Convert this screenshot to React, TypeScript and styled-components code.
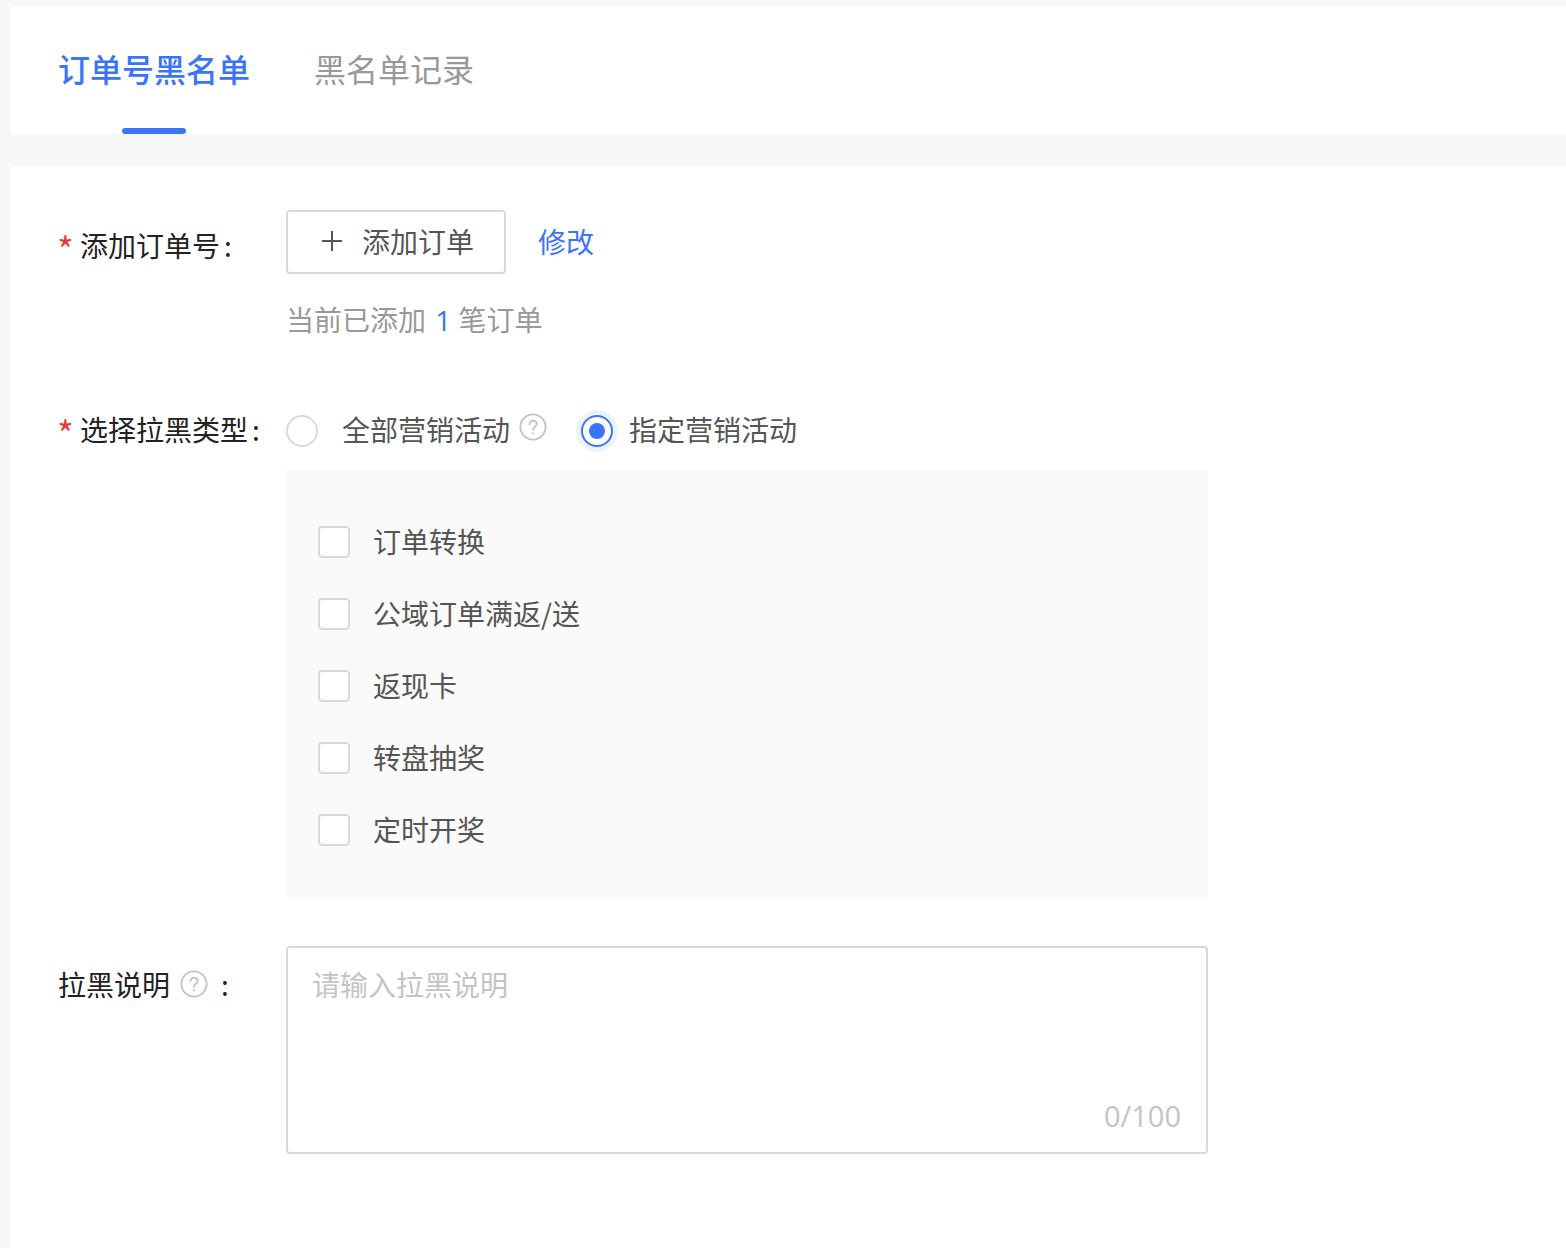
import styled, { createGlobalStyle } from "styled-components";

const campaigns = ['订单转换', '公域订单满返/送', '返现卡', '转盘抽奖', '定时开奖']

const Global = createGlobalStyle`
    * {
        box-sizing: border-box;
    }
    body {
        margin: 0;
        background: #f7f7f7;
        font-family: "Noto Sans CJK SC", "Noto Sans", sans-serif;
    }
`

const HelpIcon = ({size}: {size: number}) => (
    <svg width={size} height={size} viewBox="0 0 28 28" fill="none" stroke="#c4c4c4" strokeWidth="1.9">
        <circle cx="14" cy="14" r="12.6"/>
        <path d="M10.4 11.2c0-2.1 1.6-3.5 3.7-3.5s3.6 1.3 3.6 3.2c0 2.9-3.7 2.9-3.7 6" strokeLinecap="round"/>
        <circle cx="14" cy="20.4" r="1.1" fill="#c4c4c4" stroke="none"/>
    </svg>
)

export default function App() {
    return (
        <Page>
            <Global/>
            <TabBar>
                <Tab $active>订单号黑名单</Tab>
                <Tab>黑名单记录</Tab>
            </TabBar>
            <FormCard>
                <OrderRow>
                    <Label $required $top={14}>添加订单号<Colon>:</Colon></Label>
                    <Field>
                        <ActionLine>
                            <AddButton>
                                <svg width="20" height="20" viewBox="0 0 20 20" stroke="#555" strokeWidth="2">
                                    <path d="M10 0v20M0 10h20"/>
                                </svg>
                                添加订单
                            </AddButton>
                            <EditLink>修改</EditLink>
                        </ActionLine>
                        <Hint>当前已添加 <b>1</b> 笔订单</Hint>
                    </Field>
                </OrderRow>
                <TypeRow>
                    <Label $required $top={-1}>选择拉黑类型<Colon>:</Colon></Label>
                    <Field>
                        <RadioLine>
                            <RadioOption>
                                <Radio/>
                                <OptionText>全部营销活动</OptionText>
                                <HelpSlot><HelpIcon size={28}/></HelpSlot>
                            </RadioOption>
                            <RadioOption $checked>
                                <Radio $checked/>
                                <OptionText>指定营销活动</OptionText>
                            </RadioOption>
                        </RadioLine>
                        <CampaignPanel>
                            {campaigns.map((name) => (
                                <CampaignRow key={name}>
                                    <CheckBox/>
                                    <OptionText>{name}</OptionText>
                                </CampaignRow>
                            ))}
                        </CampaignPanel>
                    </Field>
                </TypeRow>
                <NoteRow>
                    <NoteLabel>
                        拉黑说明
                        <HelpIcon size={28}/>
                        <NoteColon>:</NoteColon>
                    </NoteLabel>
                    <NoteBox>
                        <NoteInput placeholder="请输入拉黑说明"/>
                        <Counter>0/100</Counter>
                    </NoteBox>
                </NoteRow>
            </FormCard>
        </Page>
    );
}

const Page = styled.div`
    height: 1248px;
    overflow: hidden;
    padding: 6px 0 0 10px;
`
const TabBar = styled.div`
    display: flex;
    gap: 64px;
    height: 128px;
    padding-left: 48px;
    background: #fff;
    border-radius: 6px 0 0 6px;
`
const Tab = styled.div<{ $active?: boolean }>`
    position: relative;
    padding-top: 38px;
    font-size: 32px;
    line-height: 48px;
    font-weight: ${p => p.$active ? 500 : 400};
    color: ${p => p.$active ? '#3b74f7' : '#999'};

    &::after {
        content: '';
        display: ${p => p.$active ? 'block' : 'none'};
        position: absolute;
        left: 50%;
        bottom: 0;
        width: 64px;
        height: 6px;
        margin-left: -32px;
        border-radius: 3px;
        background: #3b74f7;
    }
`
const FormCard = styled.div`
    height: 1082px;
    margin-top: 32px;
    padding: 44px 0 0 48px;
    background: #fff;
    border-radius: 6px 0 0 0;
`
const FormRow = styled.div`
    display: flex;
`
const OrderRow = styled(FormRow)``
const TypeRow = styled(FormRow)`
    margin-top: 68px;
`
const NoteRow = styled(FormRow)`
    margin-top: 49px;
`
const Label = styled.div<{ $required?: boolean; $top: number }>`
    flex: 0 0 228px;
    height: 42px;
    margin-top: ${p => p.$top}px;
    font-size: 28px;
    line-height: 42px;
    color: #222;
    white-space: nowrap;

    ${p => p.$required && `
        &::before {
            content: '*';
            display: inline-block;
            width: 22px;
            margin-left: -1px;
            margin-right: 1px;
            font-size: 36px;
            line-height: 30px;
            vertical-align: -7px;
            color: #e83a3a;
        }
    `}
`
const Colon = styled.span`
    margin-left: 4px;
`
const Field = styled.div`
    width: 922px;
`
const ActionLine = styled.div`
    display: flex;
    align-items: center;
    gap: 32px;
`
const AddButton = styled.div`
    display: flex;
    align-items: center;
    justify-content: center;
    gap: 20px;
    width: 220px;
    height: 64px;
    padding: 0 0 2px 4px;
    border: 2px solid #d9d9d9;
    border-radius: 4px;
    font-size: 28px;
    color: #555;
    background: #fff;
`
const EditLink = styled.span`
    margin-top: -2px;
    font-size: 28px;
    line-height: 64px;
    color: #3b74f7;
`
const Hint = styled.div`
    margin-top: 24px;
    font-size: 28px;
    line-height: 42px;
    color: #999;

    b {
        margin: 0 1px 0 3px;
        font-family: "Open Sans", sans-serif;
        font-weight: 400;
        color: #3b74f7;
    }
`
const RadioLine = styled.div`
    display: flex;
    align-items: center;
    height: 42px;
    gap: 34px;
`
const RadioOption = styled.div<{ $checked?: boolean }>`
    display: flex;
    align-items: center;
    gap: ${p => p.$checked ? '16px' : '24px'};
`
const Radio = styled.span<{ $checked?: boolean }>`
    position: relative;
    flex: none;
    width: 32px;
    height: 32px;
    margin-top: 1px;
    border-radius: 50%;
    background: #fff;
    border: 2px solid ${p => p.$checked ? '#3b74f7' : '#d9d9d9'};

    ${p => p.$checked && `
        box-shadow: 0 0 0 5px #ecf2fe;

        &::after {
            content: '';
            position: absolute;
            inset: 6px;
            border-radius: 50%;
            background: #3b74f7;
        }
    `}
`
const OptionText = styled.span`
    margin-top: -2px;
    font-size: 28px;
    line-height: 42px;
    color: #555;
    white-space: nowrap;
`
const HelpSlot = styled.span`
    display: flex;
    margin: -6px 0 0 -15px;
`
const CampaignPanel = styled.div`
    height: 427px;
    margin-top: 19px;
    padding: 36px 32px 0;
    background: #fafafa;
`
const CampaignRow = styled.div`
    display: flex;
    align-items: center;
    gap: 23px;
    height: 72px;
`
const CheckBox = styled.span`
    flex: none;
    width: 32px;
    height: 32px;
    border: 2px solid #d9d9d9;
    border-radius: 4px;
    background: #fff;
`
const NoteLabel = styled.div`
    display: flex;
    align-items: center;
    flex: 0 0 228px;
    height: 42px;
    margin-top: 17px;
    font-size: 28px;
    line-height: 42px;
    color: #222;

    svg {
        margin-left: 10px;
    }
`
const NoteColon = styled.span`
    margin-left: 13px;
`
const NoteBox = styled.div`
    position: relative;
    width: 922px;
    height: 208px;
    border: 2px solid #d9d9d9;
    border-radius: 4px;
`
const NoteInput = styled.textarea`
    display: block;
    width: 100%;
    height: 100%;
    padding: 15px 24px;
    border: 0;
    outline: 0;
    resize: none;
    background: transparent;
    font: 28px/42px "Noto Sans CJK SC", "Noto Sans", sans-serif;

    &::placeholder {
        color: #c4c4c4;
        opacity: 1;
    }
`
const Counter = styled.span`
    position: absolute;
    right: 25px;
    bottom: 16px;
    font-family: "Open Sans", sans-serif;
    font-size: 29px;
    line-height: 40px;
    color: #c4c4c4;
`
